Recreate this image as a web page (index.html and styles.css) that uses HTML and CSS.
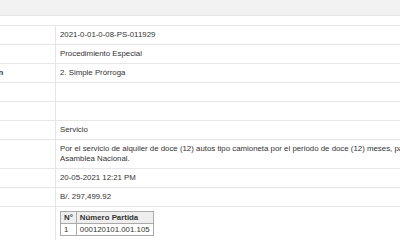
FILE: index.html
```html
<!DOCTYPE html>
<html lang="es">
<head>
<meta charset="utf-8">
<title>Detalle del proceso</title>
<link rel="stylesheet" href="styles.css">
</head>
<body>
<div class="topbar"></div>
<div class="spacer"></div>
<table class="detail">
  <tr><th></th><td>2021-0-01-0-08-PS-011929</td></tr>
  <tr><th></th><td>Procedimiento Especial</td></tr>
  <tr><th>Modalidad de Adjudicación</th><td>2. Simple Prórroga</td></tr>
  <tr><th></th><td></td></tr>
  <tr><th></th><td></td></tr>
  <tr><th></th><td>Servicio</td></tr>
  <tr><th></th><td>Por el servicio de alquiler de doce (12) autos tipo camioneta por el periodo de doce (12) meses, para uso de la<br>Asamblea Nacional.</td></tr>
  <tr><th></th><td>20-05-2021 12:21 PM</td></tr>
  <tr><th></th><td>B/. 297,499.92</td></tr>
  <tr><th></th><td>
    <table class="partidas">
      <tr><th class="num">N°</th><th>Número Partida</th></tr>
      <tr><td class="num">1</td><td>000120101.001.105</td></tr>
    </table>
  </td></tr>
</table>
</body>
</html>
```
FILE: styles.css
```css
html, body {
  margin: 0;
  padding: 0;
  background: #fff;
  overflow: hidden;
}
body {
  font-family: "Liberation Sans", Arial, sans-serif;
  font-size: 7.85px;
  line-height: 10px;
  color: #333;
  width: 400px;
  height: 240px;
}
.topbar {
  height: 15px;
  background: #f2f2f2;
  border-bottom: 1px solid #e6e6e6;
}
.spacer {
  height: 9px;
}
.detail {
  border-collapse: collapse;
  margin-left: -102px;
  width: 600px;
  border-top: 1px solid #e6e6e6;
}
.detail > tbody > tr > th,
.detail > tbody > tr > td {
  border-bottom: 1px solid #e6e6e6;
  padding: 4px 4px;
  vertical-align: top;
  text-align: left;
  white-space: nowrap;
}
.detail > tbody > tr > th {
  width: 149px;
  font-weight: bold;
  border-right: 1px solid #e6e6e6;
}
.detail > tbody > tr > td {
  height: 10px;
}
.partidas {
  border-collapse: collapse;
  border: 1px solid #888;
  width: 92px;
}
.partidas th,
.partidas td {
  border: 1px solid #aaa;
  padding: 1px 3px 0 3px;
  height: 10px;
  text-align: left;
  white-space: nowrap;
}
.partidas th {
  background: #eee;
  font-weight: bold;
}
.partidas .num {
  width: 10px;
}
```
